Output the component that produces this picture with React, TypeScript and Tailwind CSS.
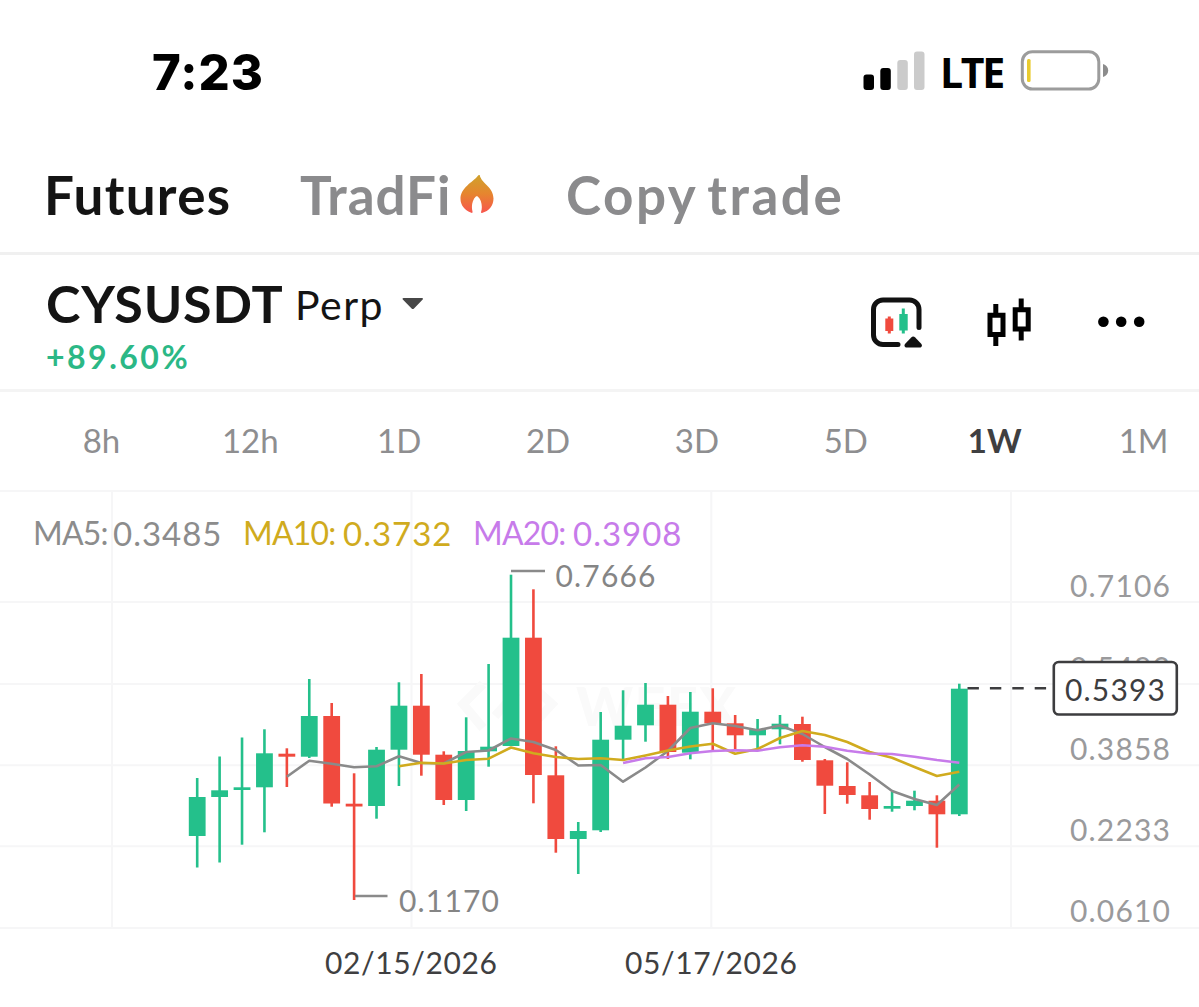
import clsx from "clsx";

const GREEN = "#24c08b";
const RED = "#f04a3e";

// [body top, body bottom, wick top, wick bottom, is up]
type Candle = [number, number, number, number, boolean];

const candles: Candle[] = [
  [797, 836, 778, 867.5, true],
  [790.3, 797, 756.5, 862.5, true],
  [787.3, 790, 737.5, 844.7, true],
  [753.3, 787.3, 729.3, 832.3, true],
  [753.7, 756.7, 748.3, 787, false],
  [716, 756.7, 679, 758, true],
  [716, 803.5, 703, 806.7, false],
  [803.7, 806.5, 773.3, 900, false],
  [749.7, 806, 747, 818.7, true],
  [705.7, 749.7, 682.3, 786, true],
  [705.7, 754.7, 674, 775.7, false],
  [754.7, 800, 751.3, 805, false],
  [751, 800, 717.3, 811, true],
  [746.7, 751.3, 664, 766.7, true],
  [637.7, 746, 574.7, 746, true],
  [637.7, 775, 589.3, 803.3, false],
  [775.3, 839, 746.3, 852.7, false],
  [831, 839, 822, 874, true],
  [739.7, 830.3, 712, 832, true],
  [725.7, 739.7, 690.3, 759, true],
  [704.7, 725.3, 683, 741.7, true],
  [704.7, 752, 696, 759, false],
  [711.7, 752.7, 692, 759.3, true],
  [711.7, 723.3, 688.3, 750.7, false],
  [723.3, 735.3, 715, 750, false],
  [729.3, 735.3, 719, 749.3, true],
  [723.7, 729.3, 715, 744.3, true],
  [724, 760, 716.7, 761.7, false],
  [760.3, 785.7, 759, 814, false],
  [786, 795, 762.3, 803.7, false],
  [795.3, 809, 782, 819.7, false],
  [806, 808.7, 791.7, 811.7, true],
  [800.7, 806, 790.7, 810.3, true],
  [800.7, 814.3, 795.3, 847.7, false],
  [688.7, 814.3, 683.7, 816, true],
];

const averages = [
  {
    start: 4,
    color: "#8a8a8a",
    ys: [
      776.7, 760.7, 763.7, 767.3, 766.3, 756.3, 763, 763.5, 752, 750.5, 738.5,
      742, 750, 765.5, 765, 781.7, 767.5, 751, 728, 723.3, 726, 730.3, 725.5,
      734, 747, 759, 774.5, 791, 799, 805, 784.5,
    ],
  },
  {
    start: 9,
    color: "#d0ab1e",
    ys: [
      766.3, 762.7, 763.5, 760, 758.7, 747.5, 753.3, 757, 759, 758.3, 760,
      755.5, 750.5, 746.5, 743.7, 753.7, 749, 738, 731, 735, 742, 752, 757.7,
      767, 776, 771.7,
    ],
  },
  {
    start: 19,
    color: "#c77bea",
    ys: [
      763, 758.3, 757, 753.3, 751, 750.3, 750.7, 747.3, 745.3, 746.7, 750.7,
      753.5, 754, 756.7, 760, 762.7,
    ],
  },
];

const legend = [
  { label: "MA5:", value: "0.3485", className: "w-[210px] text-[#8c8c8c]", labelClass: "w-[80px]" },
  { label: "MA10:", value: "0.3732", className: "w-[230px] text-[#d0ab1e]", labelClass: "w-[100px]" },
  { label: "MA20:", value: "0.3908", className: "text-[#c77bea]", labelClass: "w-[100px]" },
];

const priceLabels = [
  { y: 597, text: "0.7106" },
  { y: 678.5, text: "0.5483" },
  { y: 759.5, text: "0.3858" },
  { y: 841, text: "0.2233" },
  { y: 922, text: "0.0610" },
];

const intervals = ["8h", "12h", "1D", "2D", "3D", "5D", "1W", "1M"];

const candleX = (i: number) => 197.2 + i * 22.415;

const StatusBar = () => (
  <div className="flex h-[132px] items-start justify-between pr-[89px] pl-[152px]">
    <span className="mt-[37px] font-[Inter] text-[49px] leading-[72px] font-extrabold tracking-[1px] text-black">
      7:23
    </span>
    <div className="mt-[46px] flex items-start">
      <svg width="62" height="50" viewBox="863 46 62 50">
        <rect x="863.5" y="74.5" width="10.5" height="15.5" rx="3" fill="#000" />
        <rect x="880.3" y="68" width="10.5" height="22" rx="3" fill="#000" />
        <rect x="897.3" y="60" width="10.5" height="30" rx="3" fill="#cbcbcb" />
        <rect x="914" y="51.5" width="10.5" height="38.5" rx="3" fill="#cbcbcb" />
      </svg>
      <span className="mt-px ml-[15px] w-[80px] font-['Open_Sans'] text-[41px] leading-[50px] font-bold tracking-[-2.3px] text-black">
        LTE
      </span>
      <svg width="90" height="50" viewBox="1020 46 90 50">
        <rect x="1022.3" y="51.7" width="76.5" height="37.3" rx="10" fill="none" stroke="#9c9c9c" strokeWidth="3" />
        <rect x="1027" y="59" width="3.6" height="23" rx="1.5" fill="#e9cb2f" />
        <path d="M1103 64c3.3 1 5.2 3.3 5.2 6.500s-1.900 5.500-5.200 6.500z" fill="#8c8c8c" />
      </svg>
    </div>
  </div>
);

const Flame = () => (
  <svg width="34" height="40" viewBox="0 0 34 40" className="ml-[9px]">
    <defs>
      <linearGradient id="flame" x1="0" y1="0" x2="0" y2="1">
        <stop offset="0" stopColor="#cfa22c" />
        <stop offset="0.5" stopColor="#e6852f" />
        <stop offset="1" stopColor="#f8554e" />
      </linearGradient>
    </defs>
    <path
      d="M19.700 0C21 8 33.500 12 33.500 23.500c0 7-4.500 12.500-11.500 14.500-.8.200-1.200-.4-.9-1.200 1.600-5 .6-12-3.400-15.300-.7-.5-1.200-.5-1.800.1-3.700 3.400-4.800 9.900-3.400 14.900.3 1-.3 1.600-1.200 1.300C4.800 35.500.500 30 .500 24 .500 12.500 12.500 7.500 17.700 1c.7-.9 1.500-1.500 2-1z"
      fill="url(#flame)"
    />
  </svg>
);

const MarketTabs = () => (
  <nav className="flex h-[123px] items-center border-b-[3px] border-[#f0f0f0] pt-[5px] pl-[44px] font-[Lato] text-[53px] leading-none font-bold text-[#8b8b8d]">
    <span className="w-[256px] tracking-[1.3px] text-[#141414]">Futures</span>
    <span className="flex w-[266px] items-center tracking-[0.9px]">
      TradFi
      <Flame />
    </span>
    <span className="tracking-[2.5px] [word-spacing:-5px]">Copy trade</span>
  </nav>
);

const SymbolHeader = () => (
  <header className="flex h-[137px] justify-between border-b-[3px] border-[#f4f4f4] pr-[53px] pl-[46px] font-[Lato] text-[#141414]">
    <div className="pt-[18px]">
      <div className="flex items-baseline">
        <h1 className="w-[249px] text-[52px] leading-[60px] font-bold tracking-[0.8px]">CYSUSDT</h1>
        <span className="relative -top-[3px] text-[41px] leading-[60px] tracking-[1.5px]">Perp</span>
        <svg width="22" height="14" viewBox="0 0 22 14" className="mb-[4px] ml-[18px] self-center">
          <path d="M1.500 1h18.500c1 0 1.300.9.700 1.500L12 11.500c-.7.8-1.700.8-2.400 0L.8 2.500C.200 1.900.600 1 1.500 1z" fill="#474747" />
        </svg>
      </div>
      <p className="mt-[2px] text-[32px] leading-[34px] font-bold tracking-[2.5px] text-[#2bb886]">+89.60%</p>
    </div>
    <div className="mt-[38px] flex h-[60px]">
      <svg width="54" height="60" viewBox="870 293 54 60">
        <path
          d="M919 327.500V309.500a9.500 9.500 0 0 0-9.500-9.500h-26.500a9.500 9.500 0 0 0-9.500 9.500v25.500a9.500 9.500 0 0 0 9.500 9.500h15"
          fill="none"
          stroke="#111"
          strokeWidth="5"
          strokeLinecap="round"
        />
        <path d="M911.200 337.500q2-1.800 4 0l6 6.200c1.500 1.700.5 3.800-1.500 3.800h-13c-2 0-3-2.100-1.500-3.800z" fill="#111" />
        <path d="M885.300 318.500h2.500v-2h3v2h2.500v12.500h-2.500v2.500h-3v-2.500h-2.500z" fill={RED} />
        <path d="M899.300 314h2.500v-5.500h3v5.500h2.900v16.500h-2.900v3h-3v-3h-2.500z" fill={GREEN} />
      </svg>
      <svg width="46" height="60" viewBox="987 293 46 60" className="ml-[63px]">
        <g fill="none" stroke="#000" strokeWidth="5">
          <path d="M995.800 304v11M995.800 336v10M1021.200 298.500v11M1021.200 331v9.500" />
          <path d="M990 315.300h13v19.200h-13zM1015.200 309.700h13v19.200h-13z" />
        </g>
      </svg>
      <svg width="50" height="60" viewBox="1096 293 50 60" className="ml-[63px]">
        <circle cx="1103.400" cy="321.800" r="5.300" />
        <circle cx="1121.200" cy="321.800" r="5.300" />
        <circle cx="1139.200" cy="321.800" r="5.300" />
      </svg>
    </div>
  </header>
);

const IntervalBar = () => (
  <div className="ml-[27px] grid h-[98px] w-[1191px] grid-cols-8 items-center font-[Lato] text-[33px] text-[#8e8e90]">
    {intervals.map((name) => (
      <span
        key={name}
        className={clsx("text-center", name === "1W" && "font-bold text-[#3f3f41]")}
      >
        {name}
      </span>
    ))}
  </div>
);

const Chart = () => (
  <div className="relative h-[517px] font-[Lato]">
    <svg width="1199" height="517" viewBox="0 490 1199 517" className="block">
      {/* grid */}
      <g stroke="#f6f6f7" strokeWidth="2">
        {[491, 602, 684, 765.3, 846.3, 928].map((y) => (
          <path key={y} d={`M0 ${y}H1199`} />
        ))}
        {[112, 411.5, 711.3, 1011].map((x) => (
          <path key={x} d={`M${x} 491V928`} />
        ))}
      </g>

      {/* watermark */}
      <g fill="none" stroke="#fafafa" strokeWidth="9">
        <path d="M483 684l-20 20 20 24M530 684l22 20-22 24M495 716l22-24" />
      </g>
      <text x="576" y="726" textLength="160" className="text-[54px] font-black" fill="#fafafa">
        WEEX
      </text>

      {candles.map(([top, bottom, high, low, up], i) => {
        const x = candleX(i);
        return (
          <g key={i} fill={up ? GREEN : RED}>
            <rect x={x - 1.3} y={high} width="2.6" height={low - high} />
            <rect x={x - 8.4} y={top} width="16.8" height={bottom - top} />
          </g>
        );
      })}

      {averages.map(({ start, color, ys }) => (
        <polyline
          key={color}
          points={ys.map((y, i) => `${candleX(start + i)},${y}`).join(" ")}
          fill="none"
          stroke={color}
          strokeWidth="2.6"
          strokeLinejoin="round"
        />
      ))}

      {/* high and low of the visible range */}
      <path d="M511 571H545M355 896H387.500" stroke="#8a8a8a" strokeWidth="2.6" />
      <g fill="#858585" className="text-[30px]">
        <text x="555.5" y="587" textLength="100">0.7666</text>
        <text x="399" y="912" textLength="100">0.1170</text>
      </g>

      <g fill="#9a9a9c" className="text-[30px]">
        {priceLabels.map(({ y, text }) => (
          <text key={text} x="1070" y={y} textLength="100">
            {text}
          </text>
        ))}
      </g>

      {/* last price */}
      <path d="M967.500 688.300H1047" stroke="#3d3d3f" strokeWidth="2.6" strokeDasharray="11.4 11" />
      <rect x="1053.8" y="662" width="123" height="52.5" rx="5" fill="#fff" stroke="#3d3d3f" strokeWidth="2.6" />
      <text x="1065" y="700.5" textLength="100" fill="#3d3d3f" className="text-[30px]">
        0.5393
      </text>

      <g fill="#3f3f41" className="text-[30px]">
        <text x="325" y="973.5" textLength="172">02/15/2026</text>
        <text x="625" y="973.5" textLength="172">05/17/2026</text>
      </g>
    </svg>

    <div className="absolute top-[24px] left-[33px] flex text-[33px] leading-[38px] whitespace-nowrap">
      {legend.map(({ label, value, className, labelClass }) => (
        <div key={label} className={clsx("flex", className)}>
          <span className={clsx("text-[32px] tracking-[-0.8px]", labelClass)}>{label}</span>
          <span className="tracking-[1px]">{value}</span>
        </div>
      ))}
    </div>
  </div>
);

export default function App() {
  return (
    <div className="h-[1007px] w-[1199px] overflow-hidden bg-white">
      <StatusBar />
      <MarketTabs />
      <SymbolHeader />
      <IntervalBar />
      <Chart />
    </div>
  );
}
